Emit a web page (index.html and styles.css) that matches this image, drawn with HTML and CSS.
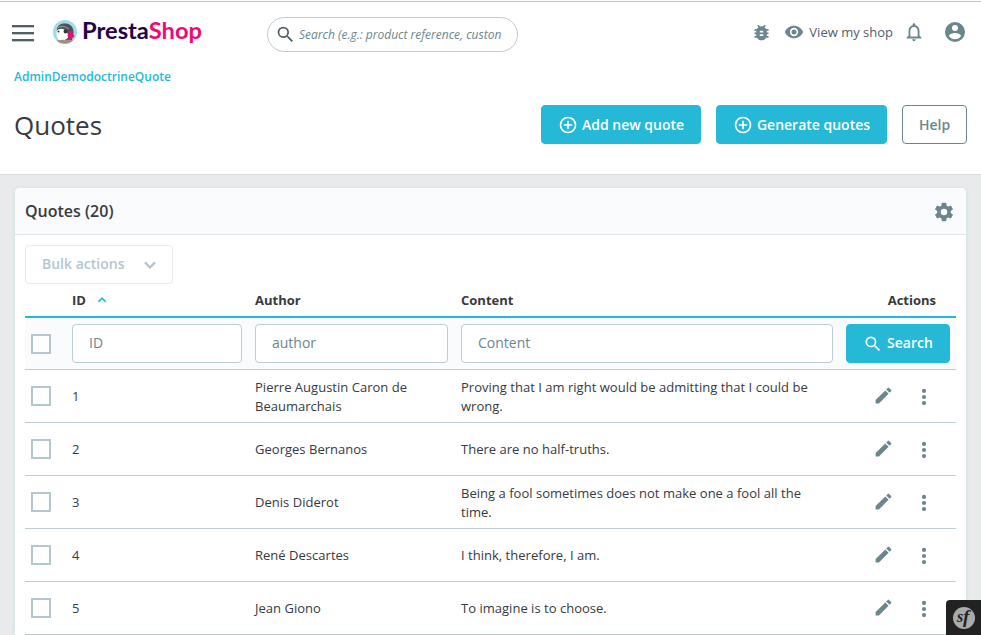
FILE: index.html
```html
<!DOCTYPE html>
<html lang="en">
<head>
<meta charset="utf-8">
<title>Quotes</title>
<link rel="stylesheet" href="styles.css">
</head>
<body>
<svg class="defs" aria-hidden="true">
  <symbol id="search" viewBox="0 0 24 24"><path d="M15.5 14h-.79l-.28-.27A6.47 6.47 0 0 0 16 9.5 6.5 6.5 0 1 0 9.5 16c1.61 0 3.09-.59 4.23-1.57l.27.28v.79l5 4.99L20.49 19l-4.99-5zm-6 0a4.5 4.5 0 1 1 0-9 4.5 4.5 0 0 1 0 9z"/></symbol>
  <symbol id="plus" viewBox="0 0 24 24"><path d="M13 7h-2v4H7v2h4v4h2v-4h4v-2h-4V7zm-1-5a10 10 0 1 0 0 20 10 10 0 0 0 0-20zm0 18a8 8 0 1 1 0-16 8 8 0 0 1 0 16z"/></symbol>
  <symbol id="edit" viewBox="0 0 24 24"><path d="M3 17.25V21h3.75L17.81 9.94l-3.75-3.75L3 17.25zM20.71 7.04a1 1 0 0 0 0-1.41l-2.34-2.34a1 1 0 0 0-1.41 0l-1.83 1.83 3.75 3.75 1.83-1.83z"/></symbol>
  <symbol id="more" viewBox="0 0 24 24"><circle cx="12" cy="5.400" r="2.300"/><circle cx="12" cy="12" r="2.300"/><circle cx="12" cy="18.600" r="2.300"/></symbol>
  <symbol id="chevron" viewBox="0 0 24 24"><path d="M7.41 8.59 12 13.17l4.59-4.58L18 10l-6 6-6-6z"/></symbol>
</svg>
<header class="top">
  <nav class="nav">
    <div class="burger"><i></i><i></i><i></i></div>
    <div class="logo">
      <svg class="mascot" viewBox="0 0 24 24">
        <circle cx="12" cy="12" r="12" fill="#9fdbea"/>
        <path d="M4 9C5 4.500 9 3 13 3.500c5 .5 8 4.500 7.500 9.500L19 20 8 21C5 18 3 13 4 9z" fill="#4d5154"/>
        <path d="M3.500 11c2-2.500 6-3 9-.5 2 2 3 4 2.500 7-2 3-6 4-9 2.500-2-2-3-6-2.500-9z" fill="#fff"/>
        <path d="M5 7.500c3-2 8-1.500 10.500 1.500" stroke="#8a8f92" stroke-width="1.200" fill="none"/>
        <circle cx="12.500" cy="11.500" r="1.900" fill="#34373a"/><circle cx="5.500" cy="11.500" r="1" fill="#34373a"/>
        <path d="M18 10.500c1.500 1.500 2.500 4 3.500 6-2 1-2.500 2-3.500 3-1.500-1-3-2-3.500-4 .5-2 2-4 3.500-5z" fill="#ed0b73"/>
        <path d="M3.500 20.500c4-1 11-1 16.500-.5-4 5-12 5-16.500.5z" fill="#a98f80"/>
      </svg>
      <svg class="wordmark" viewBox="0 0 120 34"><text x="0" y="24" textLength="120" lengthAdjust="spacingAndGlyphs">Presta<tspan class="pink">Shop</tspan></text></svg>
    </div>
    <div class="quick"><svg><use href="#search"/></svg><span>Search (e.g.: product reference, custon</span></div>
    <div class="tools">
      <svg class="bug" viewBox="0 0 24 24"><path d="M20 8h-2.810a6 6 0 0 0-1.820-1.960L17 4.410 15.590 3l-2.170 2.170a6 6 0 0 0-2.830 0L8.410 3 7 4.410l1.620 1.630A6 6 0 0 0 6.810 8H4v2h2.090c-.05.33-.09.66-.09 1v1H4v2h2v1c0 .34.040.67.090 1H4v2h2.810a6 6 0 0 0 10.380 0H20v-2h-2.090c.05-.33.090-.66.090-1v-1h2v-2h-2v-1c0-.34-.04-.67-.09-1H20V8zm-6 8h-4v-2h4v2zm0-4h-4v-2h4v2z"/></svg>
      <svg class="eye" viewBox="0 0 24 24"><path d="M12 4.500C7 4.500 2.730 7.610 1 12c1.730 4.390 6 7.500 11 7.500s9.270-3.110 11-7.500c-1.730-4.390-6-7.500-11-7.500zM12 17a5 5 0 1 1 0-10 5 5 0 0 1 0 10zm0-8a3 3 0 1 0 0 6 3 3 0 0 0 0-6z"/></svg>
      <span class="view">View my shop</span>
      <svg class="bell" viewBox="0 0 24 24"><path d="M12 22c1.100 0 2-.9 2-2h-4c0 1.100.9 2 2 2zm6-6v-5c0-3.070-1.630-5.640-4.500-6.320V4a1.500 1.500 0 0 0-3 0v.68C7.640 5.360 6 7.920 6 11v5l-2 2v1h16v-1l-2-2zm-2 1H8v-6c0-2.480 1.510-4.500 4-4.500s4 2.020 4 4.500v6z"/></svg>
      <svg class="user" viewBox="0 0 24 24"><path d="M12 2a10 10 0 1 0 0 20 10 10 0 0 0 0-20zm0 3a3 3 0 1 1 0 6 3 3 0 0 1 0-6zm0 14.200a7.200 7.200 0 0 1-6-3.220c.03-1.990 4-3.080 6-3.080s5.970 1.090 6 3.080a7.200 7.200 0 0 1-6 3.220z"/></svg>
    </div>
  </nav>
  <div class="crumb">AdminDemodoctrineQuote</div>
  <div class="heading">
    <h1>Quotes</h1>
    <div class="actions">
      <button class="btn add"><svg><use href="#plus"/></svg>Add new quote</button>
      <button class="btn generate"><svg><use href="#plus"/></svg>Generate quotes</button>
      <button class="btn help">Help</button>
    </div>
  </div>
</header>
<main>
  <section class="card">
    <div class="card-head"><h3>Quotes (20)</h3><svg viewBox="0 0 24 24"><path d="M19.430 12.980c.04-.32.070-.64.070-.98s-.03-.66-.07-.98l2.110-1.650c.19-.15.240-.42.120-.64l-2-3.460c-.12-.22-.39-.3-.61-.22l-2.490 1c-.52-.4-1.080-.73-1.690-.98l-.38-2.650A.49.49 0 0 0 14 2h-4c-.25 0-.46.180-.49.420l-.38 2.650c-.61.250-1.170.59-1.690.98l-2.490-1c-.23-.09-.49 0-.61.220l-2 3.460c-.13.220-.07.490.12.640l2.110 1.650c-.04.320-.07.650-.07.980s.03.660.070.980l-2.110 1.650c-.19.150-.24.420-.12.640l2 3.460c.12.220.39.300.61.220l2.490-1c.52.400 1.080.73 1.690.98l.38 2.650c.03.240.24.420.49.420h4c.25 0 .46-.18.490-.42l.38-2.650c.61-.25 1.170-.59 1.690-.98l2.490 1c.23.090.49 0 .61-.22l2-3.460c.12-.22.070-.49-.12-.64l-2.110-1.650zM12 15.500a3.500 3.500 0 1 1 0-7 3.500 3.500 0 0 1 0 7z"/></svg></div>
    <div class="card-body">
      <button class="bulk">Bulk actions<svg><use href="#chevron"/></svg></button>
      <div class="row labels"><span></span><span>ID<svg><use href="#chevron"/></svg></span><span>Author</span><span>Content</span><span class="right">Actions</span></div>
      <div class="row filters"><i class="check"></i><div class="field">ID</div><div class="field">author</div><div class="field">Content</div><button class="btn find"><svg><use href="#search"/></svg>Search</button></div>
      <div class="row"><i class="check"></i><span>1</span><span>Pierre Augustin Caron de Beaumarchais</span><span>Proving that I am right would be admitting that I could be wrong.</span><div class="ops"><svg><use href="#edit"/></svg><svg><use href="#more"/></svg></div></div>
      <div class="row"><i class="check"></i><span>2</span><span>Georges Bernanos</span><span>There are no half-truths.</span><div class="ops"><svg><use href="#edit"/></svg><svg><use href="#more"/></svg></div></div>
      <div class="row"><i class="check"></i><span>3</span><span>Denis Diderot</span><span>Being a fool sometimes does not make one a fool all the time.</span><div class="ops"><svg><use href="#edit"/></svg><svg><use href="#more"/></svg></div></div>
      <div class="row"><i class="check"></i><span>4</span><span>René Descartes</span><span>I think, therefore, I am.</span><div class="ops"><svg><use href="#edit"/></svg><svg><use href="#more"/></svg></div></div>
      <div class="row"><i class="check"></i><span>5</span><span>Jean Giono</span><span>To imagine is to choose.</span><div class="ops"><svg><use href="#edit"/></svg><svg><use href="#more"/></svg></div></div>
    </div>
  </section>
</main>
<div class="debug"><svg viewBox="0 0 22 22"><circle cx="11" cy="11" r="11"/><text x="4" y="15">s</text><text x="10" y="16">f</text></svg></div>
</body>
</html>
```
FILE: styles.css
```css
* { box-sizing: border-box; }
body { margin: 0; height: 635px; overflow: hidden; background: #e9eaec; font: 13px/19.5px "Open Sans", sans-serif; color: #363a41; display: flex; flex-direction: column; }
svg { fill: #6c868e; flex: none; display: block; }
.defs { position: absolute; width: 0; height: 0; }
h1, h3 { margin: 0; }
button { font-family: inherit; }

.top { flex: none; height: 175px; background: #fff; border-top: 1px solid #fff; border-bottom: 1px solid #dadbdd; box-shadow: inset 0 1px #bdc1c1; }
.nav { height: 65px; display: flex; align-items: center; padding: 0 14px 0 12px; }
.burger { width: 22px; display: grid; gap: 4px; margin-top: -2px; }
.burger i { height: 2px; background: #515f67; border-bottom: 0; box-shadow: 0 1px rgba(81,95,103,.35); }
.burger { gap: 5px; }
.logo { width: 214px; margin: -3px 0 0 19px; display: flex; align-items: center; }
.mascot { width: 24px; height: 24px; }
.wordmark { width: 120px; height: 34px; margin-left: 5px; overflow: visible; }
.wordmark text { font: 700 22px Lato, sans-serif; fill: #25034b; }
.wordmark .pink { fill: #ed0b73; }
.quick { width: 251px; height: 35px; margin-top: 2px; border: 1px solid #bbcdd2; border-radius: 18px; display: flex; align-items: center; padding: 0 16px 0 7px; }
.quick svg { width: 21px; height: 21px; fill: #515f67; margin-right: 3px; }
.quick span { white-space: nowrap; font-size: 12px; font-style: italic; color: #6c868e; }
.tools { display: flex; align-items: center; margin-left: auto; margin-top: -3px; }
.bug { width: 21px; height: 21px; }
.eye { width: 20px; height: 20px; margin-left: 12px; }
.view { font-size: 13px; color: #516067; margin: 1px 0 0 5px; white-space: nowrap; }
.bell { width: 22px; height: 22px; margin-left: 10px; }
.user { width: 24px; height: 24px; margin-left: 18px; }
.crumb { padding: 2px 14px 0; font-size: 12px; font-weight: 600; color: #25b9d7; line-height: 18px; }
.heading { display: flex; justify-content: space-between; padding: 19px 14px 0; }
h1 { font-size: 26px; font-weight: 400; line-height: 41px; }
.actions { display: flex; gap: 15px; }
.btn { height: 39px; padding: 0; border: 1px solid #25b9d7; border-radius: 4px; background: #25b9d7; color: #fff; font-size: 14px; font-weight: 600; display: flex; align-items: center; justify-content: center; }
.btn svg { fill: #fff; width: 20px; height: 20px; margin-right: 4px; }
.add { width: 160px; }
.generate { width: 171px; }
.help { width: 65px; background: #fff; border-color: #6c868e; color: #6c868e; }
.find { padding-bottom: 2px; }
.find svg { margin-top: 2px; }

main { flex: 1; min-height: 0; padding: 13px 14px 0; }
.card { height: 100%; background: #fff; border: solid #dbe6e9; border-width: 0 1px; border-radius: 5px 5px 0 0; box-shadow: 0 0 4px rgba(0,0,0,.06); }
.card-head { height: 47px; display: flex; align-items: center; justify-content: space-between; padding: 0 11px 0 10px; background: #fafbfc; border-bottom: 1px solid #dbe6e9; border-radius: 5px 5px 0 0; }
.card-head svg { width: 22px; height: 22px; margin-top: 1px; }
h3 { font-size: 16px; font-weight: 600; padding-top: 2px; }
.card-body { padding: 10px 10px 0; }
.bulk { width: 148px; height: 39px; padding: 0 12px 2px 16px; display: flex; align-items: center; justify-content: space-between; background: #fff; border: 1px solid #e9eaea; border-radius: 4px; color: #b4c7cd; font-size: 14px; font-weight: 600; }
.bulk svg { width: 22px; height: 22px; margin: 2px -1px 0 0; fill: #b4c7cd; stroke: #b4c7cd; stroke-width: .7; }
.row { display: grid; grid-template-columns: 34px 170px 193px 372px 104px; column-gap: 13px; align-items: center; height: 53px; border-bottom: 1px solid #bbcdd2; }
.row span { padding: 2px 12px 0 0; letter-spacing: .02px; }
.labels { height: 34px; border-bottom: 2px solid #25b9d7; font-weight: 700; }
.labels span { display: flex; align-items: center; letter-spacing: 0; }
.labels svg { width: 16px; height: 16px; margin: -3px 0 0 8px; fill: #25b9d7; stroke: #25b9d7; stroke-width: .7; transform: rotate(180deg); }
.labels .right { justify-content: flex-end; padding-right: 14px; }
.filters { height: 52px; background: #fafbfc; }
.check { width: 20px; height: 20px; margin-left: 6px; border: 2px solid #b3c7cd; background: #fff; }
.field { height: 39px; border: 1px solid #bbcdd2; border-radius: 4px; background: #fff; padding: 0 16px; font-size: 14px; line-height: 35px; color: #6c868e; }
.ops { display: flex; align-items: center; gap: 20px; padding-left: 27px; margin-top: -2px; }
.ops svg { width: 21px; height: 21px; }
.ops svg + svg { width: 22px; height: 22px; margin: 4px 0 0 -1px; }
.debug { position: fixed; right: 0; bottom: 0; width: 35px; height: 35px; padding: 7px; background: #222; border-radius: 4px 0 0 0; }
.debug svg { width: 22px; height: 22px; fill: #aaa; overflow: visible; }
.debug text { font: italic bold 16px "Liberation Serif", serif; fill: #222; }
.debug text + text { font-size: 19px; }
```
